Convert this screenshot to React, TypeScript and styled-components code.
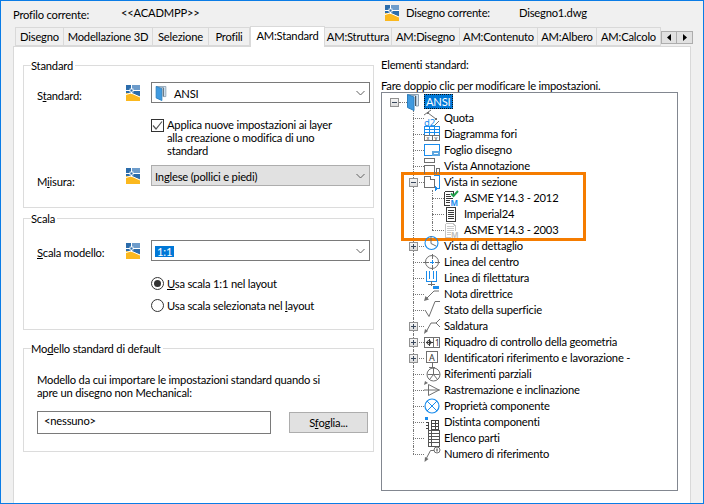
import React, { FunctionComponent, ReactNode } from "react";
import styled, { createGlobalStyle } from "styled-components";

const GlobalStyle = createGlobalStyle`
    html, body { margin: 0; padding: 0; background: #f0f0f0; }
    body { font-family: "Lato", "Noto Sans", sans-serif; font-size: 11.2px; letter-spacing: -0.2px; color: #000; }
    * { box-sizing: border-box; }
    u { text-underline-offset: 1px; }
`;

const Window = styled.div`
    width: 704px;
    height: 504px;
    border: 1px solid #0a7ce6;
    background: #f0f0f0;
    overflow: hidden;
    display: flex;
    flex-direction: column;
`;

const Header = styled.div`
    height: 26px;
    flex: none;
    display: grid;
    grid-template-columns: 108px 264px 21px 113px 1fr;
    align-items: center;
    padding-left: 12px;
    padding-bottom: 4px;
`;

const ProfileLabel = styled.span`
    padding-top: 4px;
`;

const HeaderIcon = styled.div`
    display: flex;
    align-items: center;
    padding-top: 1px;
`;

const TabStrip = styled.div`
    height: 19px;
    flex: none;
    display: flex;
    align-items: flex-end;
    margin-left: 14px;
    position: relative;
    z-index: 1;
`;

const Tab = styled.div<{ $w: number; $active?: boolean }>`
    width: ${(p) => p.$w}px;
    height: ${(p) => (p.$active ? 21 : 19)}px;
    margin-bottom: ${(p) => (p.$active ? -1 : 0)}px;
    flex: none;
    background: ${(p) => (p.$active ? "#fff" : "#f0f0f0")};
    border: 1px solid #d9d9d9;
    border-bottom: ${(p) => (p.$active ? "none" : "1px solid #d9d9d9")};
    border-left: ${(p) => (p.$active ? "1px solid #d9d9d9" : "none")};
    display: flex;
    align-items: center;
    justify-content: center;
    white-space: nowrap;
    padding-bottom: ${(p) => (p.$active ? 3 : 1)}px;
    &:first-child { border-left: 1px solid #d9d9d9; }
`;

const ScrollButtons = styled.div`
    display: flex;
    margin-bottom: 2px;
`;

const ScrollButton = styled.div`
    width: 16px;
    height: 13px;
    background: #e1e1e1;
    border: 1px solid #adadad;
    display: flex;
    align-items: center;
    justify-content: center;
    & + & { margin-left: -1px; width: 17px; }
`;

const Panel = styled.div`
    flex: 1;
    margin-left: 12px;
    margin-right: 12px;
    margin-bottom: -2px;
    background: #fff;
    border: 1px solid #d9d9d9;
    display: grid;
    grid-template-columns: 351px 1fr;
    column-gap: 7px;
    padding-left: 9px;
    padding-right: 11px;
`;

const LeftColumn = styled.div`
    padding-top: 18px;
`;

const RightColumn = styled.div`
    padding-top: 10px;
`;

const Group = styled.div<{ $h: number; $mt?: number }>`
    position: relative;
    height: ${(p) => p.$h}px;
    margin-top: ${(p) => p.$mt ?? 0}px;
    border: 1px solid #dcdcdc;
    padding-left: 13px;
`;

const Legend = styled.div`
    position: absolute;
    top: -8px;
    left: 7px;
    line-height: 15px;
    padding: 0 2px 0 0;
    background: #fff;
`;

const FieldRow = styled.div<{ $mt: number }>`
    display: grid;
    grid-template-columns: 89px 25px 219px;
    margin-top: ${(p) => p.$mt}px;
`;

const FieldLabel = styled.label<{ $drop: number }>`
    line-height: 16px;
    margin-top: ${(p) => p.$drop}px;
`;

const LayerSlot = styled.div`
    margin-top: 3px;
    height: 16px;
`;

const Combo = styled.div<{ $disabled?: boolean }>`
    height: 21px;
    background: ${(p) => (p.$disabled ? "#e1e1e1" : "#fff")};
    border: 1px solid ${(p) => (p.$disabled ? "#adadad" : "#7a7a7a")};
    display: flex;
    align-items: center;
    padding: 1px 4px 0 3px;
    gap: 7px;
    & > svg:last-child { margin-left: auto; }
`;

const SelectedText = styled.span`
    background: #0078d7;
    color: #fff;
    line-height: 11px;
    padding: 0 2px;
`;

const OptionRow = styled.div<{ $mt: number }>`
    display: flex;
    margin-top: ${(p) => p.$mt}px;
    margin-left: 114px;
    gap: 3px;
    line-height: 13px;
`;

const CheckBox = styled.div`
    width: 13px;
    height: 13px;
    flex: none;
    margin-top: 1px;
    border: 1px solid #333;
    display: flex;
    align-items: center;
    justify-content: center;
`;

const Radio = styled.div<{ $on?: boolean }>`
    width: 13px;
    height: 13px;
    flex: none;
    border: 1px solid #333;
    border-radius: 50%;
    display: flex;
    align-items: center;
    justify-content: center;
    &::after {
        content: "";
        display: ${(p) => (p.$on ? "block" : "none")};
        width: 7px;
        height: 7px;
        border-radius: 50%;
        background: #333;
    }
`;

const Description = styled.div`
    margin-top: 24px;
    line-height: 13px;
    white-space: nowrap;
`;

const BrowseRow = styled.div`
    display: flex;
    align-items: center;
    margin-top: 12px;
    gap: 18px;
`;

const PathInput = styled.div`
    width: 234px;
    height: 23px;
    border: 1px solid #7a7a7a;
    padding: 0 6px 4px;
    display: flex;
    align-items: center;
`;

const Button = styled.div`
    width: 79px;
    height: 21px;
    background: #e1e1e1;
    border: 1px solid #adadad;
    display: flex;
    align-items: center;
    justify-content: center;
`;

const Caption = styled.div<{ $mt?: number; $lh: number }>`
    line-height: ${(p) => p.$lh}px;
    margin-top: ${(p) => p.$mt ?? 0}px;
    white-space: nowrap;
`;

const Tree = styled.div`
    position: relative;
    width: 297px;
    height: 399px;
    border: 1px solid #828790;
    padding-top: 1px;
    overflow: hidden;
`;

const Highlight = styled.div`
    position: absolute;
    left: 19px;
    top: 79px;
    width: 185px;
    height: 69px;
    border: 3px solid #f57c00;
    pointer-events: none;
`;

const TreeRow = styled.div`
    display: flex;
    align-items: center;
    height: 16px;
    padding-left: 8px;
    white-space: nowrap;
`;

const Guide = styled.div<{ $w: number; $at: number; $kind: "pipe" | "tee" | "end" }>`
    position: relative;
    flex: none;
    align-self: stretch;
    width: ${(p) => p.$w}px;
    &::before {
        content: "";
        position: absolute;
        left: ${(p) => p.$at}px;
        top: 0;
        bottom: ${(p) => (p.$kind === "end" ? "8px" : "0")};
        border-left: 1px dotted #777;
    }
    &::after {
        content: "";
        display: ${(p) => (p.$kind === "pipe" ? "none" : "block")};
        position: absolute;
        left: ${(p) => p.$at}px;
        right: 0;
        top: 8px;
        border-top: 1px dotted #777;
    }
`;

const Expander = styled.div<{ $open?: boolean }>`
    position: absolute;
    z-index: 1;
    left: 19px;
    top: 4px;
    width: 9px;
    height: 9px;
    border: 1px solid #919191;
    background: linear-gradient(#f6f6f6, #dcdcdc);
    &::before {
        content: "";
        position: absolute;
        left: 1px;
        top: 3px;
        width: 5px;
        height: 1px;
        background: #39485c;
    }
    &::after {
        content: "";
        display: ${(p) => (p.$open ? "none" : "block")};
        position: absolute;
        left: 3px;
        top: 1px;
        width: 1px;
        height: 5px;
        background: #39485c;
    }
`;

const RootExpander = styled(Expander)`
    position: relative;
    left: 0;
    top: 0;
    flex: none;
`;

const RootDash = styled.div`
    width: 8px;
    flex: none;
    border-top: 1px dotted #777;
`;

const RootLabel = styled.span`
    margin-left: 5px;
    margin-bottom: 1px;
    padding: 0 2px;
    line-height: 15px;
    color: #fff;
    background: #0078d7;
    outline: 1px dotted #111;
    outline-offset: -1px;
`;

const IconSlot = styled.div<{ $w: number }>`
    width: ${(p) => p.$w}px;
    height: 16px;
    flex: none;
    position: relative;
    z-index: 1;
    & > svg { display: block; overflow: visible; }
`;

const NodeLabel = styled.span<{ $ml: number }>`
    margin-left: ${(p) => p.$ml}px;
    padding-bottom: 2px;
`;

const Chevron = () => (
    <svg width="9" height="6" viewBox="0 0 9 6">
        <path d="M.5 1 4.5 5 8.5 1" fill="none" stroke="#606060" />
    </svg>
);

const LayerIcon = () => (
    <svg width="14" height="16" viewBox="0 0 14 16">
        <rect width="14" height="16" fill="#fbb81e" />
        <path d="M0 0H14V11.5L5 8H0Z" fill="#2b6cab" />
        <path d="M6 0H14V6H6Z" fill="#6d9ccb" />
        <path d="M0 5.500H14M5.500 0V9" stroke="#fff" strokeWidth="1" />
        <path d="M0 9.500 5 8 14 12" stroke="#fff" fill="none" />
        <rect x="4" y="4" width="3" height="3" fill="#2b6cab" stroke="#fff" strokeWidth=".8" />
    </svg>
);

const BookIcon = ({ h = 17 }: { h?: number }) => (
    <svg width="12" height={h} viewBox="0 0 12 17">
        <path d="M.5.500H11.500V12H9V2L.5.500Z" fill="#d7e9f7" stroke="#8aa0b3" />
        <path d="M.5.500 7 3V16.500L.5 13.500Z" fill="#3f9ae0" stroke="#2a7fc0" />
        <path d="M8.500 2V12" stroke="#4a5560" />
    </svg>
);

const gray = "#6f6f6f";
const blue = "#1a8cec";

const QuotaIcon = () => (
    <svg width="16" height="16" viewBox="0 0 16 16">
        <path d="M0 5 7 0M15 11 10 16M4 3 12 9" fill="none" stroke={gray} />
        <path d="M3 2h2v2H3zM11 8h2v2h-2z" fill={gray} />
        <text x="0" y="15.500" fontSize="9.500" fontFamily="Noto Sans" fill={blue}>d2</text>
    </svg>
);

const HoleIcon = () => (
    <svg width="16" height="16" viewBox="0 0 16 16" shapeRendering="crispEdges">
        <rect x=".5" y=".5" width="15" height="9" fill="#fff" stroke={blue} />
        <path d="M.5 3.500H15.500M.5 6.500H15.500M5.500 1V9M10.500 1V9" stroke={blue} />
        <rect x=".5" y="9.500" width="15" height="5" fill="#fff" stroke={gray} />
        <path d="M8 10V14" stroke={gray} />
        <text x="2.500" y="14" fontSize="5.500" fontFamily="Noto Sans" fill="#333">x</text>
        <text x="10.500" y="14" fontSize="5.500" fontFamily="Noto Sans" fill="#333">y</text>
    </svg>
);

const SheetIcon = () => (
    <svg width="16" height="16" viewBox="0 0 16 16" shapeRendering="crispEdges">
        <rect x=".5" y="2.500" width="15" height="11" fill="#fff" stroke={blue} />
        <rect x="8" y="9" width="8" height="5" fill="#5ea7e0" />
        <path d="M10 11.500H14" stroke="#fff" />
    </svg>
);

const AnnotationIcon = () => (
    <svg width="16" height="16" viewBox="0 0 16 16" shapeRendering="crispEdges">
        <path d="M.5 .5H10.500V4.500H.5ZM.5 16V7.500H10.500V16M12.500 16V10.500H15.500V16" fill="none" stroke={gray} />
    </svg>
);

const SectionIcon = () => (
    <svg width="16" height="16" viewBox="0 0 16 16" shapeRendering="crispEdges">
        <path d="M.5 2.500H6.500V5.500H10.500V13.500H.5Z" fill="#fff" stroke={gray} />
        <path d="M10 1.500H15.500V14.500H11" fill="none" stroke={blue} />
        <path d="M11 12h1v5h-1zM12 13h1v3h-1z" fill={blue} />
    </svg>
);

const DocIcon = () => (
    <svg width="14" height="16" viewBox="0 0 14 16" shapeRendering="crispEdges">
        <path d="M2.500 1.500H11.500V15.500H2.500Z" fill="#fff" stroke="#3a3a3a" />
        <path d="M4 4.500H10M4 6.500H10M4 8.500H10M4 10.500H10M4 12.500H10" stroke="#3a3a3a" />
    </svg>
);

const ActiveDocIcon = () => (
    <svg width="15" height="16" viewBox="0 0 15 16">
        <path d="M.5 1.500H9V5M6 15.500H.5V1.500" fill="#fff" stroke="#3a3a3a" shapeRendering="crispEdges" />
        <path d="M2 4.500H6M2 6.500H7M2 8.500H9M2 10.500H6M2 12.500H6" stroke="#3a3a3a" shapeRendering="crispEdges" />
        <path d="M7 3.500 9.500 6 14 1" fill="none" stroke="#21a04a" strokeWidth="2" />
        <text x="6.500" y="15.500" fontSize="8" fontWeight="700" fontFamily="Noto Sans" fill={blue}>M</text>
    </svg>
);

const OldDocIcon = () => (
    <svg width="15" height="16" viewBox="0 0 15 16">
        <path d="M1.500 1.500H9L11.500 4V9M7 15.500H1.500V1.500" fill="#fff" stroke="#c4c4c4" shapeRendering="crispEdges" />
        <path d="M3 4.500H10M3 6.500H10M3 8.500H10M3 10.500H7M3 12.500H7" stroke="#c9c9c9" shapeRendering="crispEdges" />
        <text x="7" y="15.500" fontSize="8" fontWeight="700" fontFamily="Noto Sans" fill="#bdbdbd">M</text>
    </svg>
);

const DetailIcon = () => (
    <svg width="16" height="16" viewBox="0 0 16 16">
        <circle cx="7.500" cy="5" r="6.500" fill="none" stroke={blue} strokeWidth="1.100" />
        <path d="M7 -2V5.500L12 8" fill="none" stroke={gray} />
    </svg>
);

const CenterIcon = () => (
    <svg width="16" height="16" viewBox="0 0 16 16">
        <circle cx="8" cy="8" r="6.500" fill="none" stroke={gray} />
        <path d="M0 8H5M11 8H16M8 0V5M8 11V16" stroke={gray} shapeRendering="crispEdges" />
        <path d="M6 8H10M8 6V10" stroke={blue} shapeRendering="crispEdges" />
    </svg>
);

const ThreadIcon = () => (
    <svg width="16" height="16" viewBox="0 0 16 16" shapeRendering="crispEdges">
        <path d="M2.500 1V11.500H12.500V1M5.500 1V9M9.500 1V9" fill="none" stroke={blue} />
        <path d="M7.500 11V16M4 14.500H11" stroke={gray} />
    </svg>
);

const LeaderIcon = () => (
    <svg width="16" height="16" viewBox="0 0 16 16">
        <rect x="9" y="0" width="6" height="3" fill={blue} />
        <path d="M15 5H10L2 13" fill="none" stroke={gray} />
        <path d="M0 15 1.500 10 5 13.500Z" fill={gray} />
    </svg>
);

const SurfaceIcon = () => (
    <svg width="16" height="16" viewBox="0 0 16 16">
        <path d="M1 8 5 14.500 11 -.5H16" fill="none" stroke={gray} />
    </svg>
);

const WeldIcon = () => (
    <svg width="16" height="16" viewBox="0 0 16 16">
        <path d="M2 14 7 5H12L16 1M12 5 16 9" fill="none" stroke={gray} />
        <path d="M0 16 1 11 4 13Z" fill={gray} />
    </svg>
);

const FrameIcon = () => (
    <svg width="16" height="16" viewBox="0 0 16 16">
        <path d="M.5 3.500H15.500V13.500H.5ZM9.500 3V14" fill="#fff" stroke={gray} shapeRendering="crispEdges" />
        <circle cx="5" cy="8.500" r="2" fill="none" stroke="#3a3a3a" />
        <path d="M5 5V12M1.500 8.500H8.500" stroke="#3a3a3a" shapeRendering="crispEdges" />
        <text x="11" y="12" fontSize="8" fontFamily="Noto Sans" fill="#333">1</text>
    </svg>
);

const DatumIcon = () => (
    <svg width="16" height="17" viewBox="0 0 16 17">
        <rect x="2.500" y="1.500" width="11" height="11" fill="#fff" stroke={gray} shapeRendering="crispEdges" />
        <text x="5" y="10.500" fontSize="9" fontFamily="Noto Sans" fill="#333">A</text>
        <path d="M8 13V17M5 17.500H11" stroke={gray} shapeRendering="crispEdges" />
    </svg>
);

const PartialIcon = () => (
    <svg width="16" height="16" viewBox="0 0 16 16">
        <circle cx="9.500" cy="8.500" r="6.500" fill="none" stroke={gray} />
        <path d="M3.500 8.500H15.500M9.500 2V8.500L5.500 13.500M9.500 8.500 13.500 13.500" fill="none" stroke={gray} />
        <path d="M0 19 1 15 4 17Z" fill={gray} />
    </svg>
);

const TaperIcon = () => (
    <svg width="16" height="16" viewBox="0 0 16 16">
        <path d="M4.500 2.500 15 8 4.500 13.500ZM0 8H16" fill="none" stroke={gray} />
    </svg>
);

const PropertyIcon = () => (
    <svg width="16" height="16" viewBox="0 0 16 16">
        <circle cx="8" cy="8" r="7" fill="none" stroke={blue} strokeWidth="1.200" />
        <path d="M3 3 13 13M13 3 3 13" stroke={blue} />
    </svg>
);

const BomIcon = () => (
    <svg width="14" height="14" viewBox="-1 -2 14 14" shapeRendering="crispEdges">
        <rect x="0" y="1" width="3" height="3" fill={blue} />
        <path d="M.5 6.500H3.500V13.500M.5 9.500H3.500M.5 12.500H3.500M6.500 4.500H13.500V13.500H6.500ZM6.500 7.500H13.500M6.500 10.500H13.500M10 4V14" fill="none" stroke="#444" />
    </svg>
);

const PartsIcon = () => (
    <svg width="16" height="17" viewBox="0 0 16 17" shapeRendering="crispEdges">
        <path d="M4.500 .5H15.500V16.500H4.500ZM4.500 3.500H15.500M4.500 6.500H15.500M4.500 9.500H15.500M4.500 12.500H15.500M7.500 1V16" fill="#fff" stroke="#555" />
    </svg>
);

const BalloonIcon = () => (
    <svg width="18" height="16" viewBox="0 0 18 16">
        <circle cx="13" cy="4" r="3" fill="none" stroke={gray} />
        <path d="M10 4.500H6.500L2 13" fill="none" stroke={gray} />
        <path d="M.5 16 1 11 4.500 13Z" fill={gray} />
        <path d="M13 2.500V5.500" stroke="#333" />
    </svg>
);

const Tabs = [
    ["Disegno", 49], ["Modellazione 3D", 89], ["Selezione", 56], ["Profili", 41],
    ["AM:Standard", 75], ["AM:Struttura", 67], ["AM:Disegno", 68], ["AM:Contenuto", 78],
    ["AM:Albero", 59], ["AM:Calcolo", 64],
] as const;

type Node = {
    label: string;
    icon: ReactNode;
    expander?: "open" | "closed";
    child?: boolean;
    end?: boolean;
};

const nodes: Node[] = [
    { label: "Quota", icon: <QuotaIcon /> },
    { label: "Diagramma fori", icon: <HoleIcon /> },
    { label: "Foglio disegno", icon: <SheetIcon /> },
    { label: "Vista Annotazione", icon: <AnnotationIcon /> },
    { label: "Vista in sezione", icon: <SectionIcon />, expander: "open" },
    { label: "ASME Y14.3 - 2012", icon: <ActiveDocIcon />, child: true },
    { label: "Imperial24", icon: <DocIcon />, child: true },
    { label: "ASME Y14.3 - 2003", icon: <OldDocIcon />, child: true, end: true },
    { label: "Vista di dettaglio", icon: <DetailIcon />, expander: "closed" },
    { label: "Linea del centro", icon: <CenterIcon /> },
    { label: "Linea di filettatura", icon: <ThreadIcon /> },
    { label: "Nota direttrice", icon: <LeaderIcon /> },
    { label: "Stato della superficie", icon: <SurfaceIcon /> },
    { label: "Saldatura", icon: <WeldIcon />, expander: "closed" },
    { label: "Riquadro di controllo della geometria", icon: <FrameIcon />, expander: "closed" },
    { label: "Identificatori riferimento e lavorazione -", icon: <DatumIcon />, expander: "closed" },
    { label: "Riferimenti parziali", icon: <PartialIcon /> },
    { label: "Rastremazione e inclinazione", icon: <TaperIcon /> },
    { label: "Proprietà componente", icon: <PropertyIcon /> },
    { label: "Distinta componenti", icon: <BomIcon /> },
    { label: "Elenco parti", icon: <PartsIcon /> },
    { label: "Numero di riferimento", icon: <BalloonIcon /> },
];

const TreeNode: FunctionComponent<{ node: Node; last: boolean }> = ({ node, last }) => (
    <TreeRow>
        {node.child ? (
            <>
                <Guide $w={42} $at={23} $kind="pipe" />
                <Guide $w={12} $at={0} $kind={node.end ? "end" : "tee"} />
            </>
        ) : (
            <Guide $w={34} $at={23} $kind={last ? "end" : "tee"}>
                {node.expander && <Expander $open={node.expander === "open"} />}
            </Guide>
        )}
        <IconSlot $w={node.child ? 14 : 16}>{node.icon}</IconSlot>
        <NodeLabel $ml={node.child ? 6 : 4}>{node.label}</NodeLabel>
    </TreeRow>
);

export default function App() {
    return (
        <Window>
            <GlobalStyle />
            <Header>
                <ProfileLabel>Profilo corrente:</ProfileLabel>
                <span>&lt;&lt;ACADMPP&gt;&gt;</span>
                <HeaderIcon><LayerIcon /></HeaderIcon>
                <span>Disegno corrente:</span>
                <span>Disegno1.dwg</span>
            </Header>
            <TabStrip>
                {Tabs.map(([name, w]) => (
                    <Tab key={name} $w={w} $active={name === "AM:Standard"}>{name}</Tab>
                ))}
                <ScrollButtons>
                    <ScrollButton>
                        <svg width="4" height="7" viewBox="0 0 4 7"><path d="M4 0V7L0 3.500Z" /></svg>
                    </ScrollButton>
                    <ScrollButton>
                        <svg width="4" height="7" viewBox="0 0 4 7"><path d="M0 0V7L4 3.500Z" /></svg>
                    </ScrollButton>
                </ScrollButtons>
            </TabStrip>
            <Panel>
                <LeftColumn>
                    <Group $h={143}>
                        <Legend>Standard</Legend>
                        <FieldRow $mt={16}>
                            <FieldLabel $drop={6}>S<u>t</u>andard:</FieldLabel>
                            <LayerSlot><LayerIcon /></LayerSlot>
                            <Combo>
                                <BookIcon h={15} />
                                <span>ANSI</span>
                                <Chevron />
                            </Combo>
                        </FieldRow>
                        <OptionRow $mt={14}>
                            <CheckBox>
                                <svg width="11" height="9" viewBox="0 0 11 9">
                                    <path d="M1 4.500 4 8 10 .5" fill="none" stroke="#555" strokeWidth="1.200" />
                                </svg>
                            </CheckBox>
                            <span>Applica nuove impostazioni ai layer<br />alla creazione o modifica di uno<br />standard</span>
                        </OptionRow>
                        <FieldRow $mt={8}>
                            <FieldLabel $drop={9}>M<u>i</u>isura:</FieldLabel>
                            <LayerSlot><LayerIcon /></LayerSlot>
                            <Combo $disabled>
                                <span>Inglese (pollici e piedi)</span>
                                <Chevron />
                            </Combo>
                        </FieldRow>
                    </Group>
                    <Group $h={112} $mt={10}>
                        <Legend>Scala</Legend>
                        <FieldRow $mt={21}>
                            <FieldLabel $drop={5}><u>S</u>cala modello:</FieldLabel>
                            <LayerSlot><LayerIcon /></LayerSlot>
                            <Combo>
                                <SelectedText>1:1</SelectedText>
                                <Chevron />
                            </Combo>
                        </FieldRow>
                        <OptionRow $mt={16}>
                            <Radio $on />
                            <span><u>U</u>sa scala 1:1 nel layout</span>
                        </OptionRow>
                        <OptionRow $mt={9}>
                            <Radio />
                            <span>Usa scala selezionata nel <u>l</u>ayout</span>
                        </OptionRow>
                    </Group>
                    <Group $h={104} $mt={18}>
                        <Legend>Mo<u>d</u>ello standard di default</Legend>
                        <Description>
                            Modello da cui importare le impostazioni standard quando si<br />
                            apre un disegno non Mechanical:
                        </Description>
                        <BrowseRow>
                            <PathInput>&lt;nessuno&gt;</PathInput>
                            <Button><span>S<u>f</u>oglia...</span></Button>
                        </BrowseRow>
                    </Group>
                </LeftColumn>
                <RightColumn>
                    <Caption $lh={16}>Elementi standard:</Caption>
                    <Caption $lh={12} $mt={7}>Fare doppio clic per modificare le impostazioni.</Caption>
                    <Tree>
                        <TreeRow>
                            <RootExpander $open />
                            <RootDash />
                            <IconSlot $w={12}><BookIcon /></IconSlot>
                            <RootLabel>ANSI</RootLabel>
                        </TreeRow>
                        {nodes.map((n, i) => (
                            <TreeNode key={n.label} node={n} last={i === nodes.length - 1} />
                        ))}
                        <Highlight />
                    </Tree>
                </RightColumn>
            </Panel>
        </Window>
    );
}
